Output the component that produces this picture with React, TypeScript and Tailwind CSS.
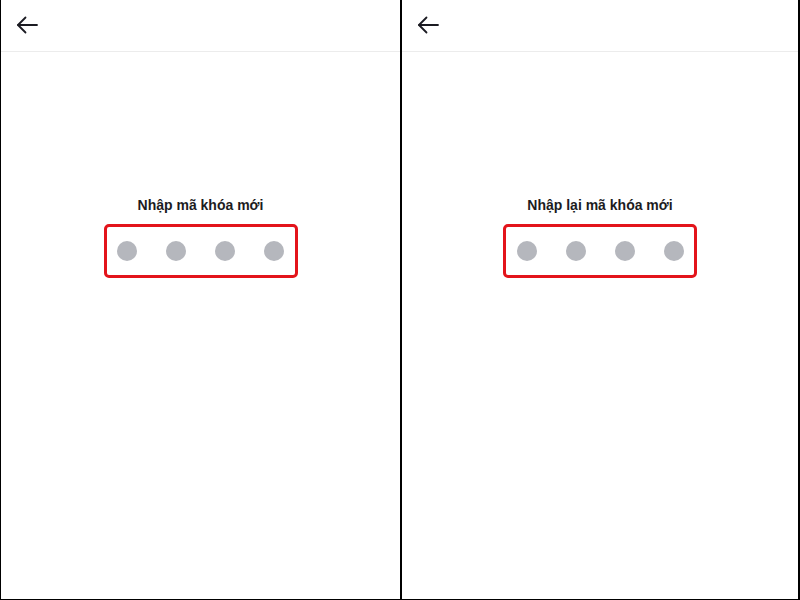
function BackArrow() {
  return (
    <svg width="22" height="18" viewBox="0 0 22 18" fill="none" stroke="#1b1b22" strokeWidth="1.8" strokeLinecap="round" strokeLinejoin="round">
      <path d="M2 9h19" />
      <path d="M9.5 1.5L2 9l7.5 7.5" />
    </svg>
  );
}

function PinPanel({ title, className }: { title: string; className: string }) {
  return (
    <div className={`flex flex-col h-full ${className}`}>
      <div className="h-[52px] border-b border-[#ececec] flex items-center pl-[15px] pb-[2px] shrink-0">
        <BackArrow />
      </div>
      <div className="flex flex-col items-center pt-[143px]">
        <h2 className="text-[14px] leading-[20px] font-bold text-[#1c1c1e]">{title}</h2>
        <div className="mt-[9px] w-[194px] h-[54px] border-[3px] border-[#e3141b] rounded-[5px] flex items-center justify-center gap-[29px]">
          {[0, 1, 2, 3].map((i) => (
            <div key={i} className="w-[20px] h-[20px] rounded-full bg-[#b5b7bd]" />
          ))}
        </div>
      </div>
    </div>
  );
}

export default function App() {
  return (
    <div
      className="w-[800px] h-[600px] bg-white border-l border-r-2 border-b border-black flex"
      style={{ fontFamily: '"Liberation Sans", Arial, sans-serif' }}
    >
      <PinPanel title="Nhập mã khóa mới" className="w-[399px]" />
      <PinPanel title="Nhập lại mã khóa mới" className="flex-1 border-l-2 border-black" />
    </div>
  );
}
